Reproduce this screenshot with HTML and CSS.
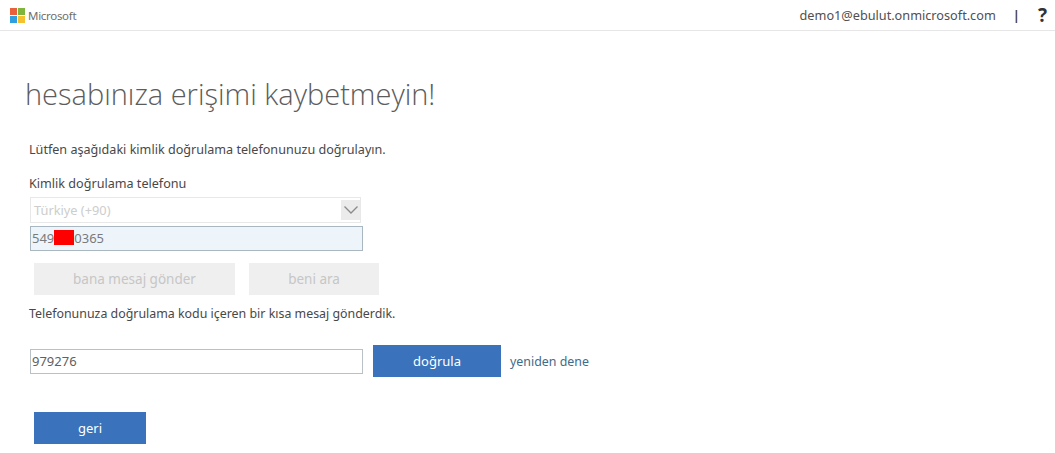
FILE: index.html
```html
<!DOCTYPE html>
<html lang="tr">
<head>
<meta charset="utf-8">
<title>hesabınıza erişimi kaybetmeyin!</title>
<link rel="stylesheet" href="styles.css">
</head>
<body>
<header class="topbar">
  <div class="brand">
    <svg class="logo" width="15" height="15" viewBox="0 0 15 15" aria-hidden="true">
      <rect width="7" height="7" fill="#e8603c"/>
      <rect x="8" width="7" height="7" fill="#7fb53c"/>
      <rect y="8" width="7" height="7" fill="#2f9fe0"/>
      <rect x="8" y="8" width="7" height="7" fill="#f5c12e"/>
    </svg>
    <span class="brand-name">Microsoft</span>
  </div>
  <div class="account">
    <span class="user">demo1@ebulut.onmicrosoft.com</span>
    <span class="sep">|</span>
    <span class="help">?</span>
  </div>
</header>
<main class="content">
  <h1 class="title">hesabınıza erişimi kaybetmeyin!</h1>
  <p class="intro">Lütfen aşağıdaki kimlik doğrulama telefonunuzu doğrulayın.</p>
  <p class="label">Kimlik doğrulama telefonu</p>
  <div class="select">
    <span class="select-text">Türkiye (+90)</span>
    <span class="select-arrow">
      <svg width="16" height="10" viewBox="0 0 16 10" aria-hidden="true"><path d="M1.500 1.500 8 8l6.500-6.500" fill="none" stroke="#8a8a8a" stroke-width="1.300"/></svg>
    </span>
  </div>
  <div class="phone">549<span class="redact"></span>0365</div>
  <div class="send-row">
    <span class="btn-off btn-sms">bana mesaj gönder</span>
    <span class="btn-off btn-call">beni ara</span>
  </div>
  <p class="sent">Telefonunuza doğrulama kodu içeren bir kısa mesaj gönderdik.</p>
  <div class="verify-row">
    <div class="code">979276</div>
    <span class="btn btn-verify">doğrula</span>
    <a class="retry" href="#">yeniden dene</a>
  </div>
  <span class="btn btn-back">geri</span>
</main>
</body>
</html>
```
FILE: styles.css
```css
html, body { margin: 0; padding: 0; }
body {
  width: 1055px;
  height: 453px;
  overflow: hidden;
  background: #fff;
  color: #484848;
  font-family: "Noto Sans", "Open Sans", sans-serif;
  font-size: 12.500px;
}
.topbar {
  height: 31px;
  box-sizing: border-box;
  border-bottom: 1px solid #e6e6e6;
  display: flex;
  justify-content: space-between;
  align-items: center;
  padding: 0 8px 0 10px;
}
.brand { display: flex; align-items: center; gap: 3px; }
.logo { display: block; }
.brand-name { font-size: 11.500px; letter-spacing: -0.3px; color: #6e6e6e; }
.account { display: flex; align-items: center; }
.user { font-size: 12.700px; color: #505050; }
.sep { margin-left: 17px; color: #444; font-size: 13px; font-weight: 700; }
.help { margin-left: 18px; font-size: 19px; font-weight: 700; color: #333; line-height: 20px; }
.content { display: flex; flex-direction: column; align-items: flex-start; padding-left: 30px; }
.title {
  margin: 43px 0 0 -5px;
  font-size: 29px;
  line-height: 40px;
  font-weight: 300;
  font-family: "Open Sans", "Noto Sans", sans-serif;
  color: #5c5c5c;
}
.intro { margin: 28px 0 0 -1px; line-height: 16px; font-size: 12.600px; }
.label { margin: 18px 0 0 -1px; line-height: 16px; font-size: 12.600px; }
.select {
  margin-top: 5px;
  width: 331px;
  height: 26px;
  box-sizing: border-box;
  border: 1px solid #e8e8e8;
  display: flex;
  justify-content: space-between;
  align-items: center;
  padding: 0 0 1px 3px;
  color: #cdcdcd;
  font-size: 12.800px;
}
.select-arrow {
  width: 19px;
  height: 20px;
  background: #ebebeb;
  display: flex;
  align-items: center;
  justify-content: center;
}
.phone {
  margin-top: 3px;
  width: 333px;
  height: 25px;
  box-sizing: border-box;
  border: 1px solid #a9b7c0;
  background: #edf5fb;
  display: flex;
  align-items: center;
  padding: 0 0 2px 1px;
  color: #7a7a7a;
  font-size: 13px;
}
.redact { width: 20px; height: 15px; background: #ff0000; }
.send-row { display: flex; gap: 14px; margin: 12px 0 0 4px; font-size: 13.500px; }
.btn-off {
  height: 32px;
  background: #efefef;
  color: #c6c6c6;
  display: flex;
  align-items: center;
  justify-content: center;
}
.btn-sms { width: 201px; }
.btn-call { width: 130px; }
.sent { margin: 11px 0 0 -1px; line-height: 16px; font-size: 12.400px; }
.verify-row { display: flex; align-items: center; margin-top: 23px; }
.code {
  width: 333px;
  height: 25px;
  box-sizing: border-box;
  border: 1px solid #b9c1c6;
  display: flex;
  align-items: center;
  padding-left: 1px;
  color: #606060;
  font-size: 13px;
}
.btn {
  background: #3a72bc;
  color: #fff;
  display: flex;
  align-items: center;
  justify-content: center;
  font-size: 13px;
}
.btn-verify { width: 128px; height: 32px; margin-left: 10px; }
.retry { margin-left: 9px; color: #3f6a8a; text-decoration: none; font-size: 12.400px; }
.btn-back { width: 112px; height: 32px; margin: 35px 0 0 4px; }
```
